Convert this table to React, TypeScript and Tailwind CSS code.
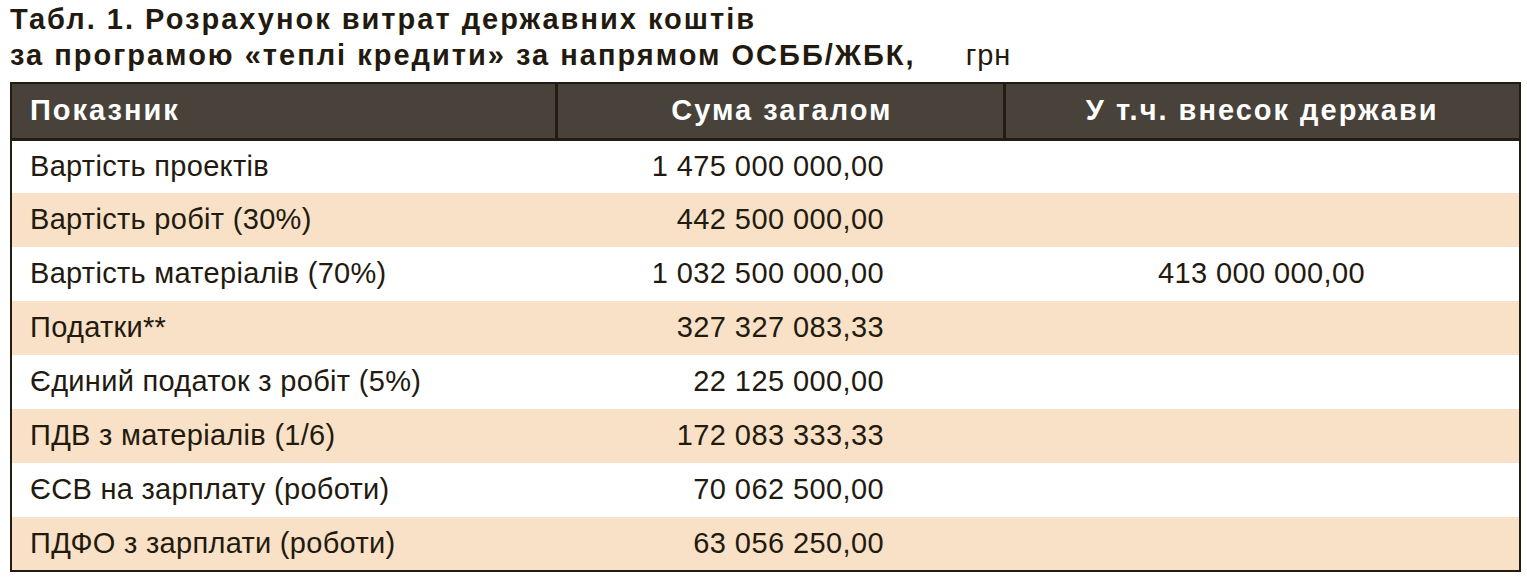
const rows: [string, string, string][] = [
  ["Вартість проектів", "1 475 000 000,00", ""],
  ["Вартість робіт (30%)", "442 500 000,00", ""],
  ["Вартість матеріалів (70%)", "1 032 500 000,00", "413 000 000,00"],
  ["Податки**", "327 327 083,33", ""],
  ["Єдиний податок з робіт (5%)", "22 125 000,00", ""],
  ["ПДВ з матеріалів (1/6)", "172 083 333,33", ""],
  ["ЄСВ на зарплату (роботи)", "70 062 500,00", ""],
  ["ПДФО з зарплати (роботи)", "63 056 250,00", ""],
];

export default function App() {
  return (
    <div className="w-[1527px] h-[586px] bg-white px-[10px] pt-[1px] text-[#231a0f] font-['Liberation_Sans',Arial,sans-serif]">
      <h1 className="text-[29px] leading-[36px] font-bold tracking-[2px]">
        Табл. 1. Розрахунок витрат державних коштів
        <br />
        за програмою «теплі кредити» за напрямом ОСББ/ЖБК,
        <span className="font-normal tracking-[1px] ml-[50px]">грн</span>
      </h1>
      <table className="mt-[9px] w-[1509px] border-collapse border-2 border-[#231c10] table-fixed">
        <colgroup>
          <col className="w-[545px]" />
          <col className="w-[448px]" />
          <col className="w-[516px]" />
        </colgroup>
        <thead>
          <tr className="h-[56px] bg-[#48423b] text-white text-[29px] font-bold tracking-[2px] border-b-[3px] border-[#231c10]">
            <th className="text-left pl-[18px] border-r-[3px] border-[#231c10]">Показник</th>
            <th className="text-right pr-[110px] border-r-[3px] border-[#231c10]">Сума загалом</th>
            <th className="text-center">У т.ч. внесок держави</th>
          </tr>
        </thead>
        <tbody className="text-[29px]">
          {rows.map(([name, total, state], i) => (
            <tr key={name} className={`h-[54px] ${i % 2 ? "bg-[#f8e1c6]" : "bg-white"}`}>
              <td className="pl-[18px] tracking-[0.3px]">{name}</td>
              <td className="text-right pr-[120px] tracking-[0.4px]">{total}</td>
              <td className="text-center tracking-[0.4px]">{state}</td>
            </tr>
          ))}
        </tbody>
      </table>
    </div>
  );
}
